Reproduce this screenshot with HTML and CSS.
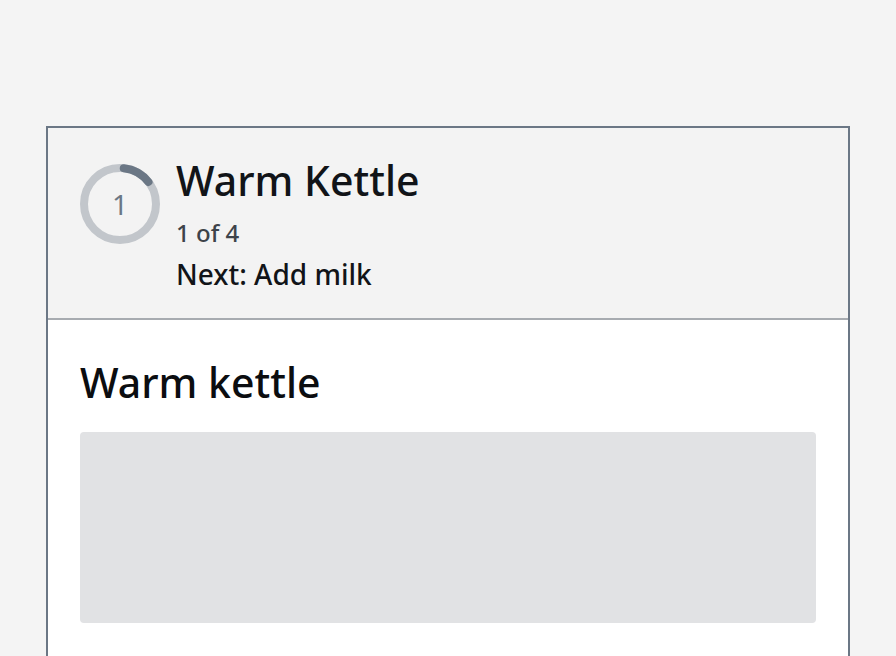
FILE: index.html
```html
<!DOCTYPE html>
<html lang="en">
<head>
<meta charset="utf-8">
<title>Warm Kettle</title>
<link rel="stylesheet" href="styles.css">
</head>
<body>
<main class="page">
  <section class="card">
    <header class="card-header">
      <div class="ring">
        <svg class="ring-svg" width="80" height="80" viewBox="0 0 80 80" aria-hidden="true">
          <circle cx="40" cy="40" r="36" fill="none" stroke="#c2c6cb" stroke-width="8"/>
          <circle cx="40" cy="40" r="36" fill="none" stroke="#6b7785" stroke-width="8"
                  stroke-linecap="round" stroke-dasharray="29 300" transform="rotate(-84 40 40)"/>
        </svg>
        <span class="ring-label">1</span>
      </div>
      <div class="step-info">
        <h1 class="step-title">Warm Kettle</h1>
        <div class="step-count">1 of 4</div>
        <div class="step-next">Next: Add milk</div>
      </div>
    </header>
    <div class="card-body">
      <h2 class="body-title">Warm kettle</h2>
      <div class="placeholder"></div>
    </div>
  </section>
</main>
</body>
</html>
```

FILE: styles.css
```css
html, body {
  margin: 0;
  padding: 0;
}
body {
  background: #f4f4f4;
  font-family: "Noto Sans", "Open Sans", sans-serif;
  color: #111418;
}
.page {
  padding: 126px 46px 0 46px;
}
.card {
  border: 2px solid #6b7785;
  border-bottom: none;
  height: 528px;
  background: #ffffff;
  display: flex;
  flex-direction: column;
}
.card-header {
  box-sizing: border-box;
  height: 192px;
  flex: none;
  background: #f3f3f3;
  border-bottom: 2px solid #a7abb0;
  display: flex;
  align-items: flex-start;
  gap: 16px;
  padding: 28px 32px 0 32px;
}
.ring {
  position: relative;
  width: 80px;
  height: 80px;
  margin-top: 8px;
  flex: none;
}
.ring-svg {
  display: block;
}
.ring-label {
  position: absolute;
  inset: 0;
  display: flex;
  align-items: center;
  justify-content: center;
  font-size: 28px;
  color: #6b7785;
}
.step-info {
  display: flex;
  flex-direction: column;
}
.step-title {
  margin: 0;
  font-size: 41px;
  line-height: 48px;
  font-weight: 500;
  color: #111418;
}
.step-count {
  margin-top: 15px;
  font-size: 24px;
  line-height: 28px;
  font-weight: 500;
  color: #3d434a;
}
.step-next {
  margin-top: 9px;
  font-size: 28px;
  line-height: 36px;
  font-weight: 500;
  color: #111418;
}
.card-body {
  padding: 38px 32px 0 32px;
}
.body-title {
  margin: 0 0 26px 0;
  font-size: 41px;
  line-height: 48px;
  font-weight: 500;
  color: #0b0d10;
}
.placeholder {
  height: 191px;
  background: #e1e2e4;
  border-radius: 4px;
}
```
